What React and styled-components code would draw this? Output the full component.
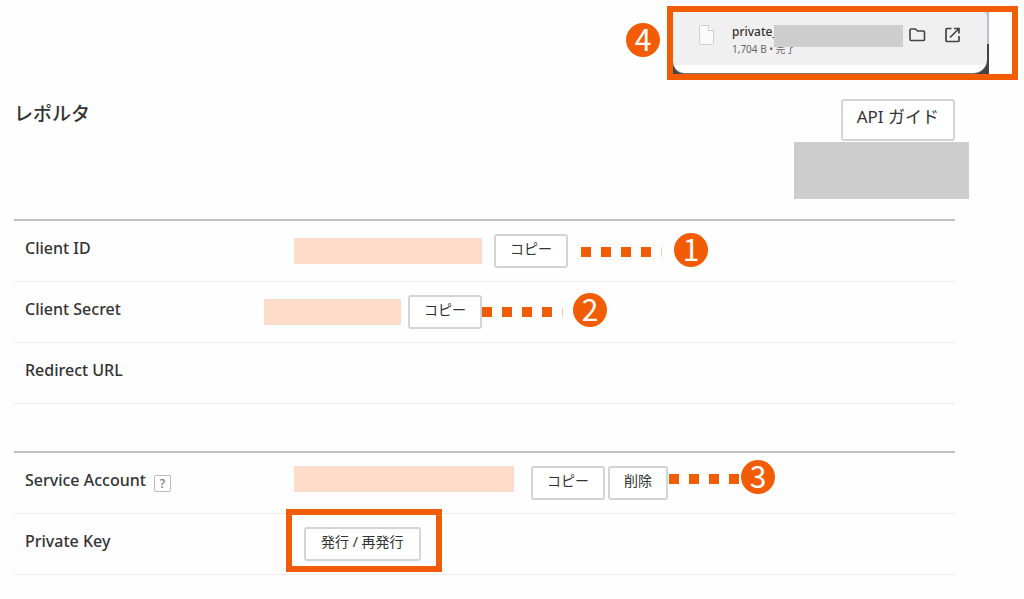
import React from "react";
import styled, { createGlobalStyle } from "styled-components";

const ORANGE = "#f25c05";

const GlobalStyle = createGlobalStyle`
  *, *::before, *::after { box-sizing: border-box; }
  body {
    margin: 0;
    background: #fefefe;
    color: #333;
    font-family: "Noto Sans", "Noto Sans CJK JP", sans-serif;
  }
  button { font-family: inherit; color: inherit; margin: 0; }
`;

const Badge = styled.span`
  flex: none;
  width: 34px;
  height: 34px;
  border-radius: 50%;
  background: ${ORANGE};
  color: #fff;
  font: 400 30px/30px "Noto Sans CJK JP", sans-serif;
  text-align: center;
`;

const TopBar = styled.div`
  display: flex;
  justify-content: flex-end;
  align-items: center;
  gap: 7px;
  padding: 6px 6px 0;
  & > ${Badge} { margin-bottom: 6px; }
`;

const DownloadFrame = styled.section`
  width: 351px;
  height: 74px;
  border: 6px solid ${ORANGE};
  padding-right: 23px;
`;

const DownloadShade = styled.div`
  height: 100%;
  background: linear-gradient(#b9bdd0 0 32px, #444 32px);
`;

const DownloadPanel = styled.div`
  height: 100%;
  margin-right: 2px;
  border-bottom: 1px solid #777;
  border-radius: 0 4px 14px 12px;
  background: linear-gradient(#f0f0f0 0 53px, #fff 53px);
  display: flex;
  align-items: flex-start;
  padding: 12px 26px 0 25px;
`;

const FileText = styled.div`
  position: relative;
  flex: 1;
  margin-left: 17px;
  white-space: nowrap;
`;

const FileName = styled.div`
  font-size: 12px;
  line-height: 16px;
  font-weight: 500;
`;

const FileMeta = styled.div`
  font-size: 10px;
  line-height: 16px;
  margin-top: 1px;
  color: #666;
`;

const NameMask = styled.div`
  position: absolute;
  left: 42px;
  top: 1px;
  width: 129px;
  height: 22px;
  background: #cecdce;
`;

const IconButton = styled.button`
  display: flex;
  border: 0;
  padding: 0;
  background: none;
  color: #444;
  & + & { margin-left: 17px; }
`;

const Main = styled.main`
  padding: 19px 69px 24px 14px;
`;

const Header = styled.header`
  display: flex;
  justify-content: space-between;
  align-items: flex-start;
  height: 120px;
`;

const Title = styled.h1`
  margin: 0;
  font-size: 19px;
  line-height: 30px;
  font-weight: 500;
`;

const HeaderSide = styled.div`
  display: flex;
  flex-direction: column;
  align-items: flex-end;
  gap: 1px;
`;

const AccountMask = styled.div`
  width: 175px;
  height: 57px;
  margin-right: -14px;
  background: #cecdce;
`;

const Button = styled.button`
  flex: none;
  height: ${(p) => (p.$large ? "42px" : "34px")};
  padding: 0 ${(p) => (p.$wide ? 15 : 14)}px ${(p) => (p.$large ? 6 : 4)}px;
  border: 2px solid #d4d4d4;
  border-radius: 3px;
  background: #fff;
  font-size: ${(p) => (p.$large ? "17px" : "14px")};
  line-height: 24px;
  white-space: nowrap;
`;

const Table = styled.table`
  width: 100%;
  border-top: 2px solid #c0c0c0;
  border-spacing: 0;
  table-layout: fixed;
  & + & { margin-top: 47px; }
`;

const Label = styled.th`
  width: 250px;
  height: 61px;
  padding: 0 0 6px 11px;
  border-bottom: 1px solid #ebebeb;
  font-size: 16px;
  line-height: 24px;
  font-weight: 500;
  text-align: left;
`;

const Cell = styled.td`
  padding: 0;
  border-bottom: 1px solid #ebebeb;
`;

const Values = styled.div`
  display: flex;
  align-items: ${(p) => p.$align || "center"};
  padding-left: ${(p) => p.$indent || 0}px;
`;

const Mask = styled.div`
  width: ${(p) => p.$width}px;
  height: 26px;
  margin-right: ${(p) => p.$gap}px;
  background: #fddcca;
`;

const Actions = styled.div`
  display: flex;
  gap: 3px;
`;

const Callout = styled.div`
  display: flex;
  align-items: center;
  margin-left: ${(p) => p.$start || 0}px;
  margin-top: ${(p) => -(p.$rise || 0)}px;
`;

const Dots = styled.div`
  display: flex;
  gap: 10px;
  margin-top: 4px;
  margin-right: ${(p) => p.$end}px;
`;

const Dot = styled.span`
  width: 10px;
  height: 10px;
  background: ${ORANGE};
`;

const DotEnd = styled.span`
  width: 1px;
  height: 10px;
  background: #fbc9ad;
`;

const HelpButton = styled.button`
  width: 17px;
  height: 17px;
  margin-left: 8px;
  padding: 0;
  border: 1px solid #bbb;
  border-radius: 2px;
  background: #fff;
  font-size: 12px;
  line-height: 15px;
  font-weight: 500;
  color: #777;
  vertical-align: -2px;
`;

const Highlighted = styled.div`
  position: relative;
  &::after {
    content: "";
    position: absolute;
    inset: -18px -21px -11px -18px;
    border: 6px solid ${ORANGE};
    pointer-events: none;
  }
`;

function Pointer({ number, start, rise, end, tail }) {
  return (
    <Callout $start={start} $rise={rise}>
      <Dots $end={end}>
        <Dot />
        <Dot />
        <Dot />
        <Dot />
        {tail && <DotEnd />}
      </Dots>
      <Badge>{number}</Badge>
    </Callout>
  );
}

function Row({ label, help, children }) {
  return (
    <tr>
      <Label scope="row">
        {label}
        {help && <HelpButton type="button" aria-label="Help">?</HelpButton>}
      </Label>
      <Cell>{children}</Cell>
    </tr>
  );
}

function Download() {
  return (
    <DownloadFrame>
      <DownloadShade>
        <DownloadPanel>
          <svg width="17" height="22" viewBox="0 0 17 22" fill="#fafafa" stroke="#cfcfcf" aria-hidden="true">
            <path d="M2.5 1.5h8l5 5v13a1 1 0 0 1-1 1h-12a1 1 0 0 1-1-1v-17a1 1 0 0 1 1-1z" />
            <path d="M10.5 1.5v5h5" />
          </svg>
          <FileText>
            <FileName>private_</FileName>
            <FileMeta>1,704 B • 完了</FileMeta>
            <NameMask />
          </FileText>
          <IconButton type="button" aria-label="Show in folder">
            <svg width="18" height="22" viewBox="0 0 18 22" fill="none" stroke="currentColor" strokeWidth="1.600" strokeLinejoin="round">
              <path d="M3 5h4.500l2 2h6a1 1 0 0 1 1 1v7.500a1 1 0 0 1-1 1h-12.500a1 1 0 0 1-1-1v-9.500a1 1 0 0 1 1-1z" />
            </svg>
          </IconButton>
          <IconButton type="button" aria-label="Open">
            <svg width="18" height="22" viewBox="0 0 18 22" fill="none" stroke="currentColor" strokeWidth="1.700">
              <path d="M8.500 4.500H4a1 1 0 0 0-1 1V16.500a1 1 0 0 0 1 1H15a1 1 0 0 0 1-1V12M11 4.500h5v5M16 4.500l-9 9" />
            </svg>
          </IconButton>
        </DownloadPanel>
      </DownloadShade>
    </DownloadFrame>
  );
}

export default function App() {
  return (
    <>
      <GlobalStyle />
      <TopBar>
        <Badge>4</Badge>
        <Download />
      </TopBar>
      <Main>
        <Header>
          <Title>レポルタ</Title>
          <HeaderSide>
            <Button type="button" $large>API ガイド</Button>
            <AccountMask />
          </HeaderSide>
        </Header>
        <Table>
          <tbody>
            <Row label="Client ID">
              <Values $indent={30}>
                <Mask $width={188} $gap={12} />
                <Button type="button">コピー</Button>
                <Pointer number={1} start={13} rise={2} end={12} tail />
              </Values>
            </Row>
            <Row label="Client Secret">
              <Values>
                <Mask $width={137} $gap={7} />
                <Button type="button">コピー</Button>
                <Pointer number={2} rise={4} end={10} tail />
              </Values>
            </Row>
            <Row label="Redirect URL" />
          </tbody>
        </Table>
        <Table>
          <tbody>
            <Row label="Service Account" help>
              <Values $indent={30} $align="flex-start">
                <Mask $width={220} $gap={17} />
                <Actions>
                  <Button type="button">コピー</Button>
                  <Button type="button">削除</Button>
                </Actions>
                <Pointer number={3} start={1} rise={6} end={2} />
              </Values>
            </Row>
            <Row label="Private Key">
              <Values $indent={40}>
                <Highlighted>
                  <Button type="button" $wide>発行 / 再発行</Button>
                </Highlighted>
              </Values>
            </Row>
          </tbody>
        </Table>
      </Main>
    </>
  );
}
